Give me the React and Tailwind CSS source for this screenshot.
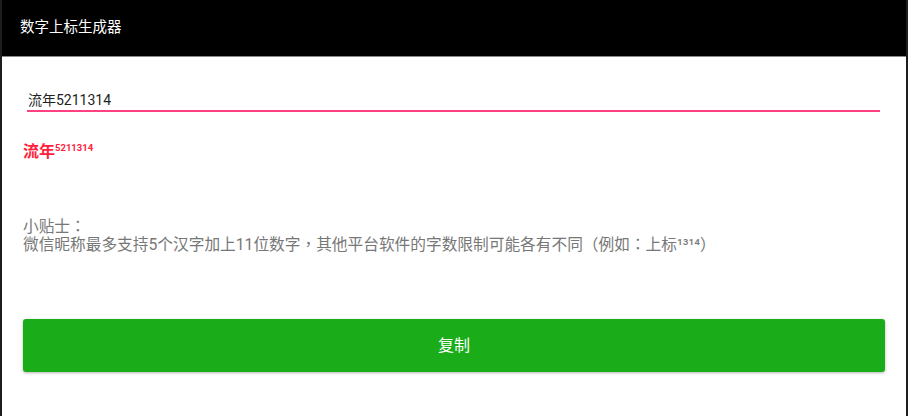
import React, { useState } from "react";

const SUP = { 0: "⁰", 1: "¹", 2: "²", 3: "³", 4: "⁴", 5: "⁵", 6: "⁶", 7: "⁷", 8: "⁸", 9: "⁹" };

function splitText(text) {
  // Chinese part first, then the trailing digits become the superscript
  const m = text.match(/^(.*?)(\d*)$/);
  return { base: m[1], digits: m[2] };
}

export default function App() {
  const [text, setText] = useState("流年5211314");
  const { base, digits } = splitText(text);

  return (
    <div
      className="h-[416px] w-full bg-white border-x-2 border-[#1c1c21] flex flex-col"
      style={{ fontFamily: "Roboto, 'Noto Sans CJK SC', sans-serif" }}
    >
      {/* Toolbar */}
      <div className="h-[57px] shrink-0 bg-black border-b border-[#8a8a8a] flex items-center pl-[18px]">
        <h1 className="text-[14.5px] text-white">数字上标生成器</h1>
      </div>

      <div className="px-[21px] flex flex-col">
        {/* Input */}
        <div className="mt-[31px] ml-[4px] mr-[5px]">
          <input
            className="w-full h-[24px] px-[1px] text-[14px] text-[#222] bg-transparent outline-none border-b-2 border-[#ff4081]"
            value={text}
            onChange={(e) => setText(e.target.value)}
          />
        </div>

        {/* Result */}
        <div className="mt-[29px] h-[22px] flex items-start text-[#ff1e3c] font-bold">
          <span className="text-[16px] leading-[22px]">{base}</span>
          <span className="text-[9.5px] leading-[12px] mt-[1px]">{digits}</span>
        </div>

        {/* Tips */}
        <div
          className="mt-[55px] text-[15.7px] leading-[18px] text-[#777]"
          style={{ fontFamily: "Roboto, 'Noto Sans CJK TC', sans-serif" }}
        >
          <p>小贴士：</p>
          <p>
            微信昵称最多支持5个汉字加上11位数字，其他平台软件的字数限制可能各有不同（例如：上标
            {"1314".split("").map((d) => SUP[d]).join("")}）
          </p>
        </div>

        {/* Copy button */}
        <button
          className="mt-[65px] h-[53px] w-full rounded-[3px] bg-[#1aad19] text-white text-[16px] shadow-[0_1px_3px_rgba(0,0,0,0.3)]"
          onClick={() => navigator.clipboard?.writeText(base + digits.split("").map((d) => SUP[d]).join(""))}
        >
          复制
        </button>
      </div>
    </div>
  );
}
